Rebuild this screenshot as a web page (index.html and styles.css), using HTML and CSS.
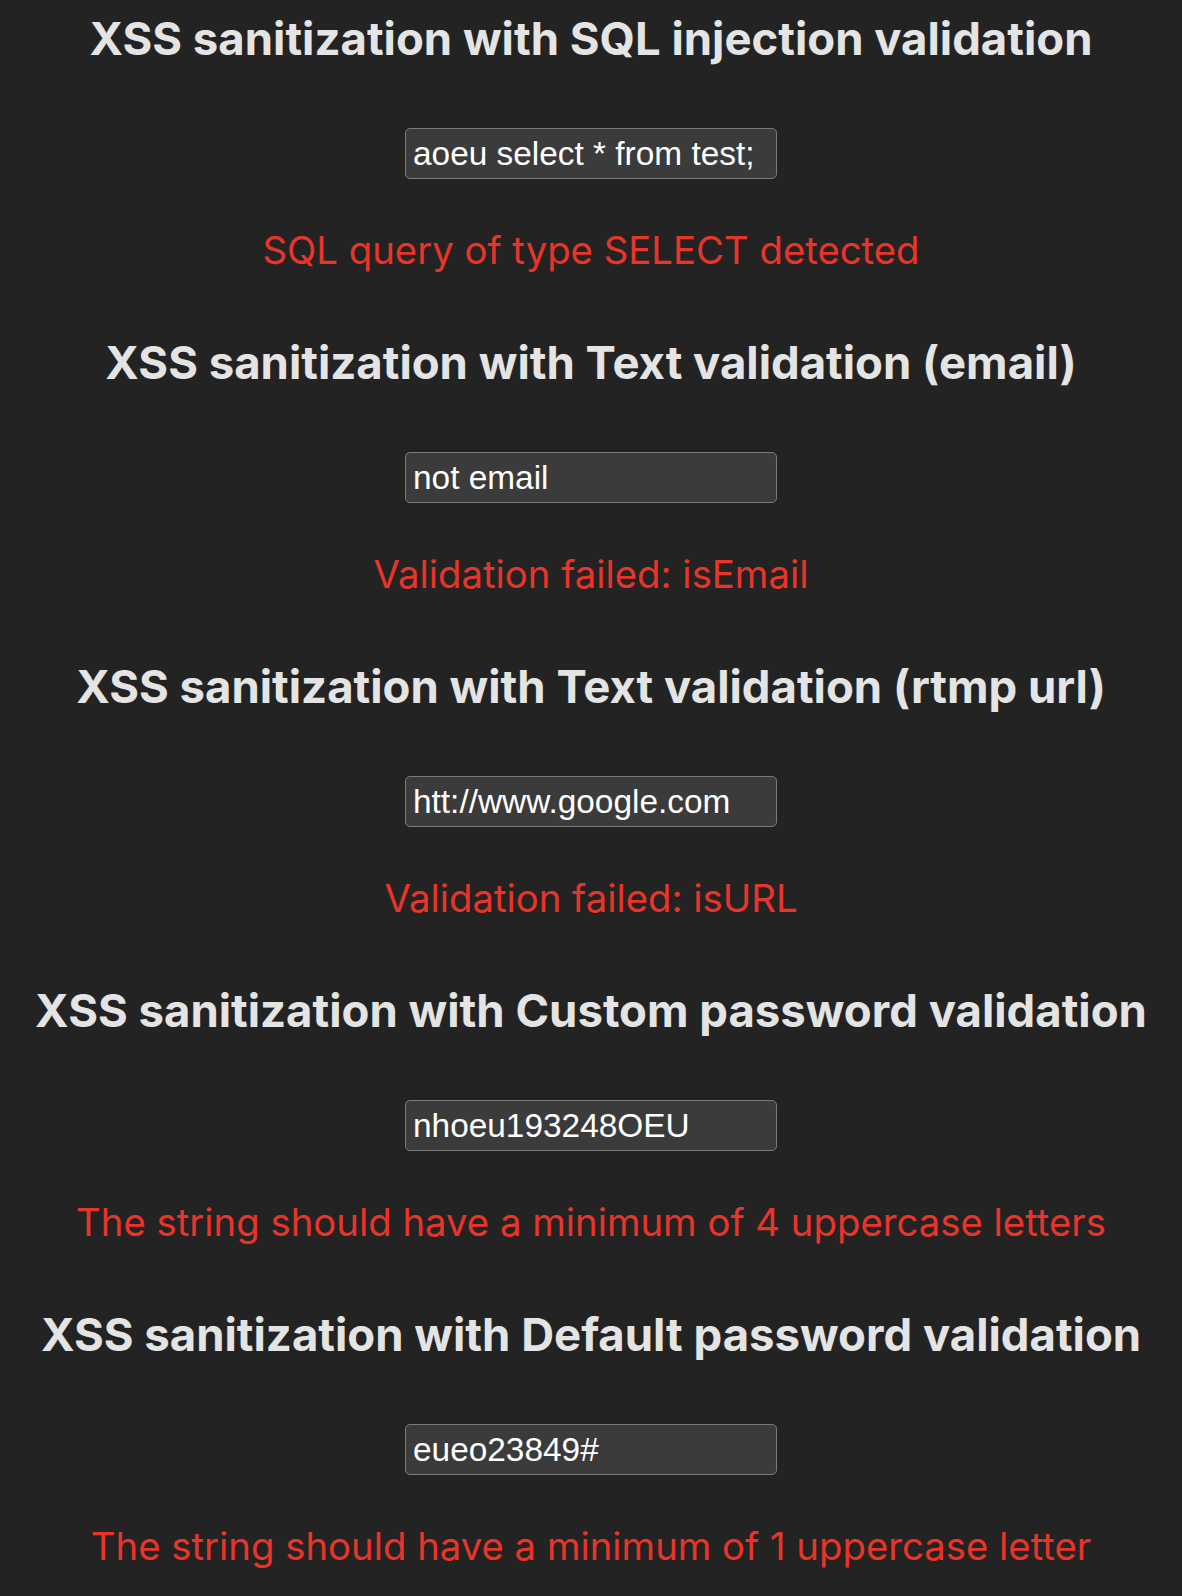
FILE: index.html
```html
<!DOCTYPE html>
<html lang="en">
<head>
<meta charset="utf-8">
<title>XSS sanitization</title>
<link rel="stylesheet" href="styles.css">
</head>
<body>
<main class="page">
  <section class="demo">
    <h2 class="demo-title">XSS sanitization with SQL injection validation</h2>
    <input class="demo-input" type="text" value="aoeu select * from test;">
    <p class="demo-error">SQL query of type SELECT detected</p>
  </section>
  <section class="demo">
    <h2 class="demo-title">XSS sanitization with Text validation (email)</h2>
    <input class="demo-input" type="text" value="not email">
    <p class="demo-error">Validation failed: isEmail</p>
  </section>
  <section class="demo">
    <h2 class="demo-title">XSS sanitization with Text validation (rtmp url)</h2>
    <input class="demo-input" type="text" value="htt://www.google.com">
    <p class="demo-error">Validation failed: isURL</p>
  </section>
  <section class="demo">
    <h2 class="demo-title">XSS sanitization with Custom password validation</h2>
    <input class="demo-input" type="text" value="nhoeu193248OEU">
    <p class="demo-error">The string should have a minimum of 4 uppercase letters</p>
  </section>
  <section class="demo">
    <h2 class="demo-title">XSS sanitization with Default password validation</h2>
    <input class="demo-input" type="text" value="eueo23849#">
    <p class="demo-error">The string should have a minimum of 1 uppercase letter</p>
  </section>
</main>
</body>
</html>
```
FILE: styles.css
```css
html, body {
  margin: 0;
  padding: 0;
  background: #232323;
}

.page {
  display: flex;
  flex-direction: column;
  gap: 63px;
  padding-top: 12px;
}

.demo {
  display: flex;
  flex-direction: column;
  align-items: center;
}

.demo-title {
  margin: 0;
  font-family: Inter, "Noto Sans", sans-serif;
  font-weight: 700;
  font-size: 45.5px;
  line-height: 54px;
  color: #e4e4e4;
  text-align: center;
  white-space: nowrap;
}

.demo-input {
  box-sizing: border-box;
  margin-top: 62px;
  width: 372px;
  height: 51px;
  padding: 0 7px;
  border: 1px solid #7b7b7b;
  border-radius: 5px;
  background: #3b3b3b;
  color: #ffffff;
  font-family: "Liberation Sans", Arial, sans-serif;
  font-size: 33.4px;
  outline: none;
}

.demo-error {
  margin: 48px 0 0;
  font-family: Inter, "Noto Sans", sans-serif;
  font-weight: 400;
  font-size: 38.3px;
  line-height: 46px;
  color: #e8352a;
  text-align: center;
  white-space: nowrap;
}
```
